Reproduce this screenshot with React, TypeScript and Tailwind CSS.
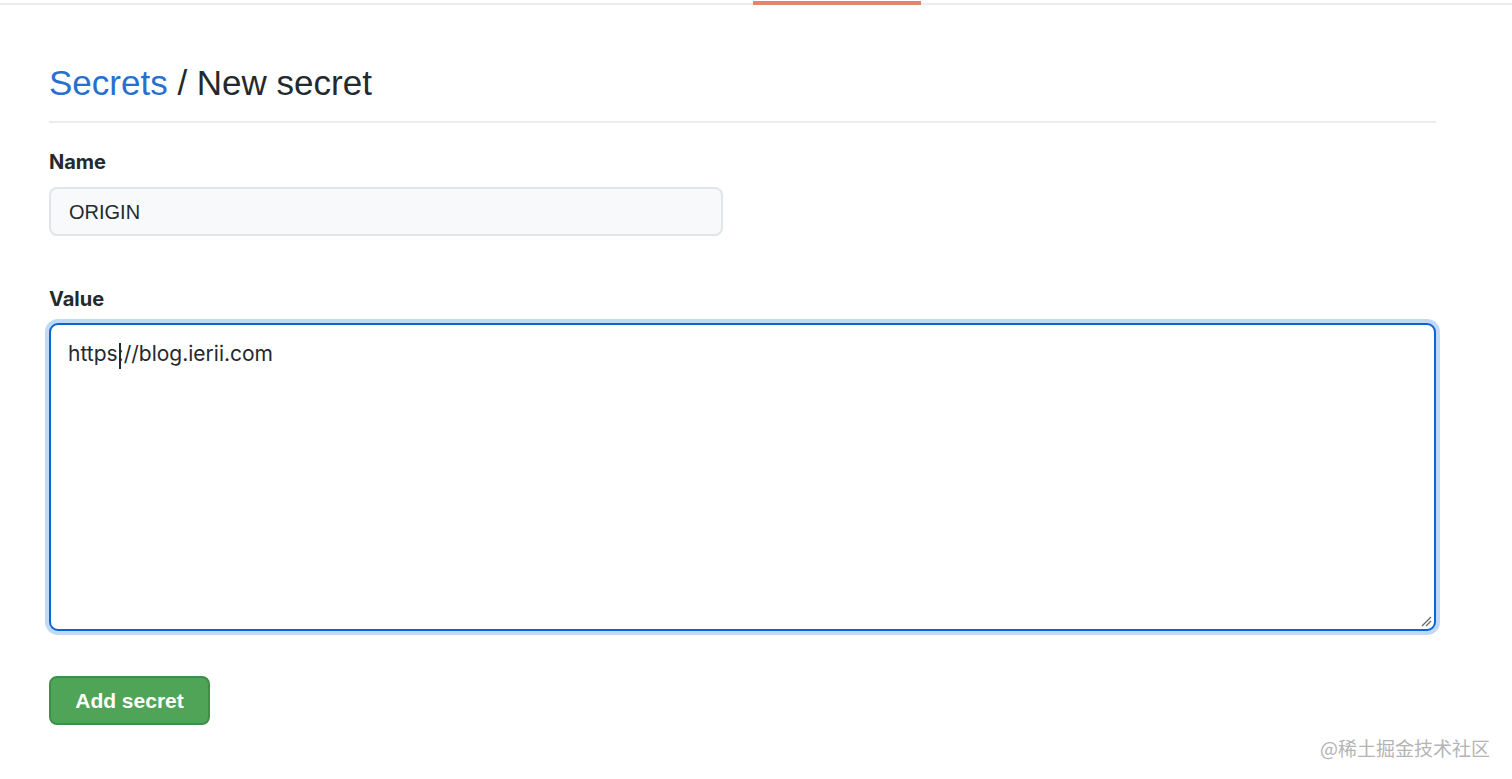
import React from "react";

export default function App() {
  const font = { fontFamily: '"Liberation Sans", Arial, "Noto Sans CJK SC", sans-serif' };
  const inter = { fontFamily: 'Inter, "Liberation Sans", Arial, sans-serif' };
  return (
    <div className="w-[1512px] h-[779px] bg-white relative overflow-hidden" style={font}>
      {/* top tab strip */}
      <div className="h-[5px] relative">
        <div className="absolute left-0 right-0 top-[3px] h-[2px] bg-[#ececec]" />
        <div className="absolute left-[753px] w-[168px] top-[1px] h-[4px] bg-[#e5846b]" />
      </div>

      <div className="ml-[49px] w-[1387px] pt-[56px]">
        <div className="border-b-2 border-[#eaecef] pb-[16px]">
          <h1 className="text-[35px] leading-[44px] text-[#24292e] font-normal">
            <span className="text-[#2870cf]">Secrets</span> / New secret
          </h1>
        </div>

        <div className="mt-[25px]">
          <div className="text-[20px] leading-[28px] font-bold text-[#24292e]" style={inter}>Name</div>
          <div className="mt-[11px] w-[674px] h-[49px] rounded-[8px] border-2 border-[#e1e4e8] bg-[#f7f9fb] flex items-center px-[18px] text-[20px] text-[#24292e]">
            ORIGIN
          </div>
        </div>

        <div className="mt-[49px]">
          <div className="text-[20px] leading-[28px] font-bold text-[#24292e]" style={inter}>Value</div>
          <div className="mt-[10px] h-[308px] rounded-[9px] border-2 border-[#0a64d6] bg-white relative shadow-[0_0_0_4px_rgba(3,102,214,0.25)] px-[17px] pt-[14px] text-[21px] leading-[30px] text-[#24292e]" style={inter}>
            <span>https</span>
            <span className="relative">
              <span className="absolute left-[1px] top-[2px] w-[2px] h-[26px] bg-[#24292e]" />
              ://blog.ierii.com
            </span>
            <svg className="absolute right-[2px] bottom-[2px]" width="12" height="12" viewBox="0 0 12 12">
              <line x1="2" y1="11" x2="11" y2="2" stroke="#666" strokeWidth="1.2" />
              <line x1="6" y1="11" x2="11" y2="6" stroke="#666" strokeWidth="1.2" />
            </svg>
          </div>
        </div>

        <div className="mt-[45px]">
          <button className="w-[161px] h-[49px] rounded-[8px] bg-[#50a458] border-2 border-[#3f8f48] text-white text-[21px] font-bold">
            Add secret
          </button>
        </div>
      </div>

      <div className="absolute right-[22px] top-[734px] text-[19px] text-[#b4b4b4]" style={{ fontFamily: '"Noto Sans CJK SC", sans-serif' }}>
        @稀土掘金技术社区
      </div>
    </div>
  );
}
